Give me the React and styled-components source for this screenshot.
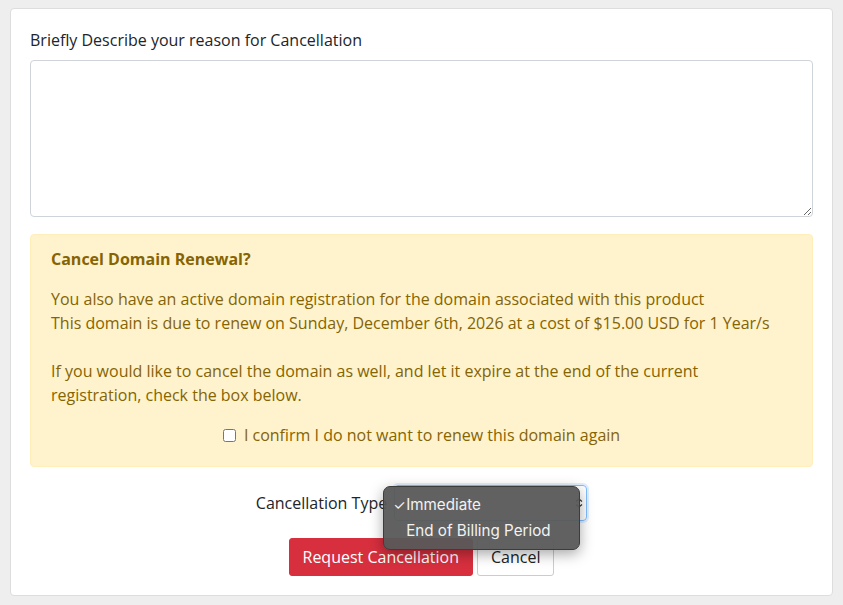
import React from "react";
import styled, { createGlobalStyle } from "styled-components";

const GlobalStyle = createGlobalStyle`
  html, body {
    margin: 0;
    background: #eeeeee;
    font-family: "Open Sans", "Liberation Sans", sans-serif;
    color: #212529;
  }
  * { box-sizing: border-box; }
`;

const App = () => (
  <Page>
    <GlobalStyle />
    <Card>
      <Label>Briefly Describe your reason for Cancellation</Label>
      <Reason />
      <Alert>
        <AlertTitle>Cancel Domain Renewal?</AlertTitle>
        <AlertText>
          You also have an active domain registration for the domain associated with this product
          <br />
          This domain is due to renew on Sunday, December 6th, 2026 at a cost of $15.00 USD for 1 Year/s
        </AlertText>
        <AlertText>
          If you would like to cancel the domain as well, and let it expire at the end of the current
          registration, check the box below.
        </AlertText>
        <ConfirmRow>
          <input type="checkbox" />
          <span>I confirm I do not want to renew this domain again</span>
        </ConfirmRow>
      </Alert>
      <TypeRow>
        <span>Cancellation Type</span>
        <SelectWrap>
          <FakeSelect>
            <svg width="8" height="10" viewBox="0 0 8 10">
              <path d="M1 3.5 L4 1 L7 3.5 M1 6.5 L4 9 L7 6.5" fill="none" stroke="#333" strokeWidth="1.2" />
            </svg>
          </FakeSelect>
          <Menu>
            <MenuItem checked>Immediate</MenuItem>
            <MenuItem>End of Billing Period</MenuItem>
          </Menu>
        </SelectWrap>
      </TypeRow>
      <Buttons>
        <Button variant="danger">Request Cancellation</Button>
        <Button>Cancel</Button>
      </Buttons>
    </Card>
  </Page>
);

const Page = styled.div`
  min-height: 605px;
  padding: 8px 10px;
`;

const Card = styled.div`
  width: 823px;
  background: #fff;
  border: 1px solid #dddddd;
  border-radius: 4px;
  padding: 20px 19px 19px;
`;

const Label = styled.div`
  font-size: 16px;
  line-height: 23px;
  margin-bottom: 8px;
`;

const Reason = styled.textarea`
  display: block;
  width: 100%;
  height: 157px;
  border: 1px solid #ced4da;
  border-radius: 4px;
  margin: 0 0 17px;
  font: inherit;
`;

const Alert = styled.div`
  background: #fff3cd;
  border: 1px solid #ffeeba;
  border-radius: 4px;
  color: #856404;
  font-size: 16px;
  line-height: 24px;
  padding: 12px 20px 19px;
`;

const AlertTitle = styled.div`
  font-weight: 700;
  margin-bottom: 16px;
`;

const AlertText = styled.p`
  margin: 0 0 24px;
  &:nth-of-type(2) { margin-bottom: 16px; }
`;

const ConfirmRow = styled.label`
  display: flex;
  justify-content: center;
  align-items: center;
  gap: 8px;
  input { margin: 0; width: 13px; height: 13px; }
`;

const TypeRow = styled.div`
  display: flex;
  justify-content: center;
  align-items: center;
  gap: 7px;
  margin-top: 18px;
  font-size: 16px;
`;

const SelectWrap = styled.div`
  position: relative;
`;

const FakeSelect = styled.div`
  width: 193px;
  height: 36px;
  border: 1px solid #80bdff;
  border-radius: 4px;
  box-shadow: 0 0 0 2px rgba(0, 123, 255, 0.12);
  display: flex;
  align-items: center;
  justify-content: flex-end;
  padding: 0 3px 0 12px;
`;

const Menu = styled.div`
  position: absolute;
  left: -11px;
  top: 1px;
  width: 197px;
  padding: 5px 0;
  background: rgba(88, 88, 88, 0.95);
  border: 1px solid #3c3c3c;
  border-radius: 7px;
  box-shadow: 0 4px 14px rgba(0, 0, 0, 0.35);
  font-family: Inter, "Liberation Sans", sans-serif;
  font-size: 15.2px;
  color: #f2f2f2;
`;

const MenuItem = styled.div`
  height: 26px;
  line-height: 26px;
  padding-left: 22px;
  position: relative;
  &::before {
    content: ${(p) => (p.checked ? '"✓"' : "none")};
    position: absolute;
    left: 9px;
    font-size: 14px;
  }
`;

const Buttons = styled.div`
  display: flex;
  justify-content: center;
  gap: 4px;
  margin-top: 17px;
`;

const Button = styled.button`
  height: 38px;
  padding: 0 13px;
  font-family: "Open Sans", "Liberation Sans", sans-serif;
  font-size: 16px;
  border-radius: 3px;
  border: 1px solid ${(p) => (p.variant === "danger" ? "#d72f3e" : "#cccccc")};
  background: ${(p) => (p.variant === "danger" ? "#d72f3e" : "#fff")};
  color: ${(p) => (p.variant === "danger" ? "#fff" : "#222")};
`;

export default App;
